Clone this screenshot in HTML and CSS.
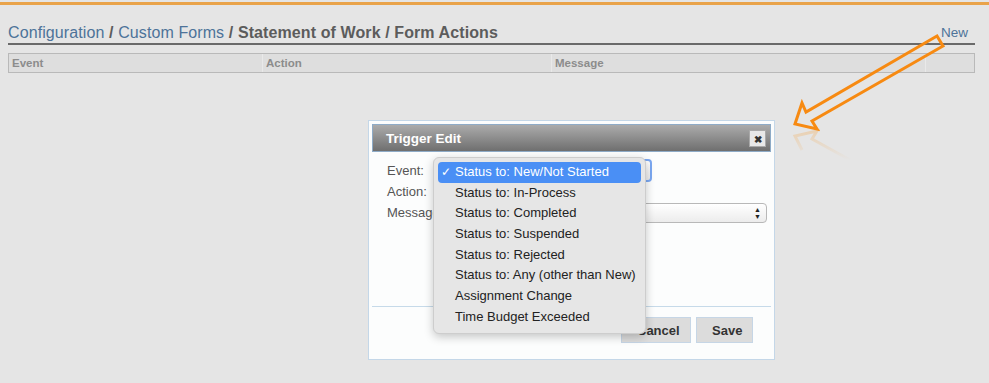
FILE: index.html
```html
<!DOCTYPE html>
<html lang="en">
<head>
  <meta charset="UTF-8" />
  <title>Form Actions</title>
  <link rel="stylesheet" href="styles.css">
</head>
<body>

  <div class="top-bar"></div>

  <div class="page">
    <div class="title-row">
      <div class="crumbs">
        <a href="#">Configuration</a> <span class="sep">/</span>
        <a href="#">Custom Forms</a> <span class="sep">/</span>
        <span class="current">Statement of Work / Form Actions</span>
      </div>
      <a href="#" class="new-link">New</a>
    </div>

    <div class="grid-head">
      <div class="col">Event</div>
      <div class="col">Action</div>
      <div class="col">Message</div>
      <div class="col"></div>
    </div>
  </div>

  <!-- modal -->
  <div class="dialog">
    <div class="dialog-title">
      <span>Trigger Edit</span>
      <span class="close-btn">&#x2716;</span>
    </div>
    <div class="dialog-body">
      <div class="field">
        <label>Event:</label>
        <div class="select select-event"></div>
      </div>
      <div class="field">
        <label>Action:</label>
        <div class="select select-action"></div>
      </div>
      <div class="field">
        <label>Message</label>
        <div class="select select-message"><span class="arrows">&#x25B2;<br>&#x25BC;</span></div>
      </div>
    </div>
    <div class="dialog-foot">
      <button class="btn">Cancel</button>
      <button class="btn">Save</button>
    </div>

    <ul class="popup">
      <li class="active"><span class="check">&#x2713;</span>Status to: New/Not Started</li>
      <li>Status to: In-Process</li>
      <li>Status to: Completed</li>
      <li>Status to: Suspended</li>
      <li>Status to: Rejected</li>
      <li>Status to: Any (other than New)</li>
      <li>Assignment Change</li>
      <li>Time Budget Exceeded</li>
    </ul>
  </div>

  <!-- callout arrow -->
  <svg class="callout" width="989" height="383" viewBox="0 0 989 383">
    <defs>
      <linearGradient id="fade" x1="0" y1="0" x2="0" y2="1">
        <stop offset="0" stop-color="#f7941d" stop-opacity="0.25"/>
        <stop offset="1" stop-color="#f7941d" stop-opacity="0"/>
      </linearGradient>
    </defs>
    <polygon points="937,36 943,46 812,121 817,129 795,124 802,103 806,112"
             fill="none" stroke="#f78a12" stroke-width="3" stroke-linejoin="miter"/>
    <polyline points="802,150 795,136 817,131 812,139 850,160"
              fill="none" stroke="url(#fade)" stroke-width="3"/>
  </svg>

</body>
</html>
```

FILE: styles.css
```css
body {
  margin: 0;
  background: #e5e5e5;
  font-family: "Liberation Sans", Arial, sans-serif;
  color: #555;
}

.top-bar {
  margin-top: 2px;
  height: 3px;
  background: #e9a34a;
}

.page {
  padding: 0 14px 0 8px;
}

.title-row {
  display: flex;
  justify-content: space-between;
  align-items: flex-end;
  margin-top: 19px;
  border-bottom: 2px solid #6a6a6a;
  padding-bottom: 1px;
}

.crumbs {
  font-size: 16px;
  line-height: 18px;
  letter-spacing: 0.1px;
}

.crumbs a {
  color: #4d7399;
  text-decoration: none;
}

.crumbs .sep,
.crumbs .current {
  color: #5c5c5c;
  font-weight: bold;
}

.new-link {
  font-size: 13.5px;
  line-height: 16px;
  color: #4d7399;
  text-decoration: none;
  margin-right: 7px;
  margin-bottom: 1px;
}

.grid-head {
  display: grid;
  grid-template-columns: 253px 289px 374px 1fr;
  margin-top: 8px;
  border: 1px solid #b9b9b9;
  background: #dedede;
  height: 18px;
}

.grid-head .col {
  font-size: 11.5px;
  font-weight: bold;
  color: #8c8c8c;
  line-height: 18px;
  padding-left: 3px;
  border-left: 1px solid #e9e9e9;
}

.grid-head .col:first-child {
  border-left: none;
}

/* Dialog */
.dialog {
  position: absolute;
  left: 368px;
  top: 120px;
  width: 399px;
  height: 232px;
  padding: 3px;
  background: #fcfdfd;
  border: 1px solid #c4d7e8;
  display: flex;
  flex-direction: column;
}

.dialog-title {
  display: flex;
  justify-content: space-between;
  align-items: center;
  height: 26px;
  padding: 0 4px 0 13px;
  border: 1px solid #8eabc7;
  background: linear-gradient(#ababab, #6f6f6f);
  color: #fff;
  font-size: 13.5px;
  font-weight: bold;
}

.close-btn {
  width: 17px;
  height: 17px;
  background: #e8e8e8;
  border: 1px solid #a9a9a9;
  color: #333;
  font-size: 10px;
  line-height: 17px;
  text-align: center;
  box-sizing: border-box;
}

.dialog-body {
  flex: 1;
  padding: 8px 0 0 15px;
  border-bottom: 1px solid #c6dae9;
}

.field {
  display: flex;
  align-items: center;
  height: 21px;
}

.field label {
  width: 51px;
  font-size: 13px;
  color: #555;
}

.select {
  height: 18px;
  border: 1px solid #b8b8b8;
  border-radius: 4px;
  background: linear-gradient(#ffffff, #ececec);
  position: relative;
}

.select-event {
  width: 210px;
  height: 19px;
  border: 2px solid #7ba8f2;
}

.select-action {
  width: 180px;
}

.select-message {
  width: 327px;
}

.arrows {
  position: absolute;
  right: 5px;
  top: 2px;
  font-size: 7px;
  line-height: 7px;
  color: #222;
}

.dialog-foot {
  display: flex;
  justify-content: flex-end;
  gap: 5px;
  padding: 10px 18px 13px 0;
}

.btn {
  height: 26px;
  padding: 0 15px;
  background: #dcdcdc;
  border: 1px solid #c6d6e6;
  font-family: "Liberation Sans", Arial, sans-serif;
  font-size: 13px;
  font-weight: bold;
  color: #333;
}

.btn:first-child {
  width: 70px;
}

.btn:last-child {
  width: 57px;
}

/* Open select menu */
.popup {
  position: absolute;
  left: 64px;
  top: 36px;
  width: 203px;
  margin: 0;
  padding: 4px 4px 5px;
  list-style: none;
  background: #e6e6e6;
  border: 1px solid #cdcdcd;
  border-radius: 6px;
  box-shadow: 0 3px 10px rgba(0, 0, 0, 0.22);
}

.popup li {
  height: 20.7px;
  line-height: 20.7px;
  padding-left: 17px;
  font-size: 13px;
  color: #222;
  position: relative;
  border-radius: 4px;
}

.popup li.active {
  background: #4a8ff5;
  color: #fff;
}

.check {
  position: absolute;
  left: 3px;
  font-size: 12px;
}

.callout {
  position: absolute;
  left: 0;
  top: 0;
  pointer-events: none;
}
```
